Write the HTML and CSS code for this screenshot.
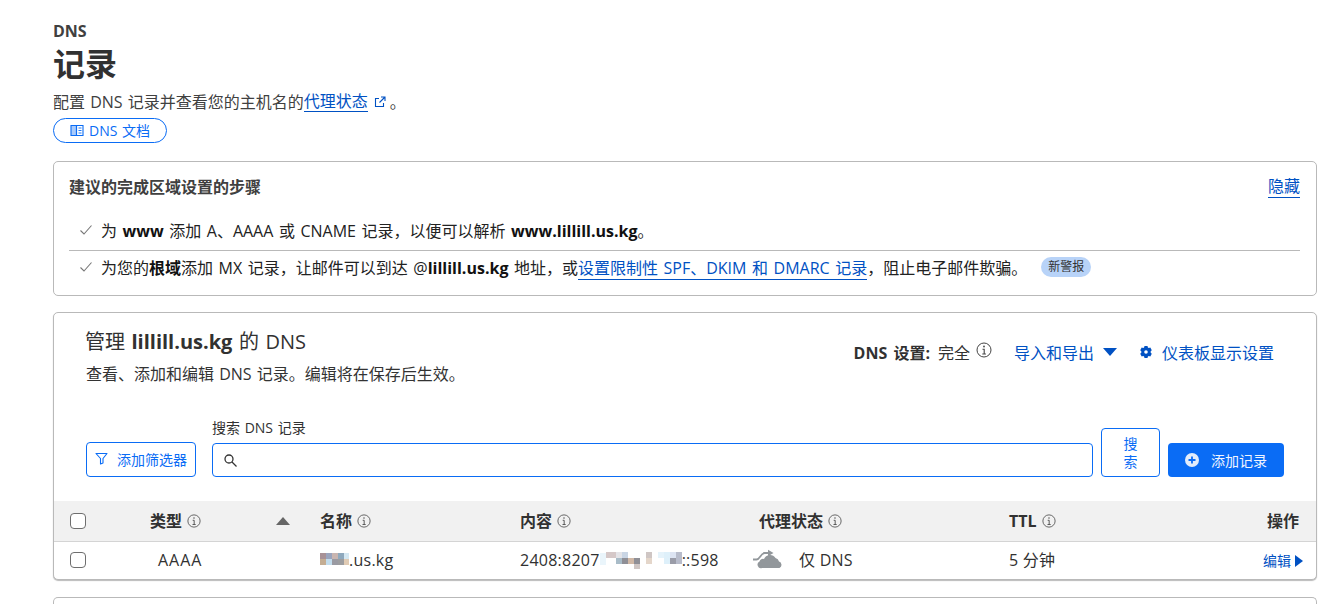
FILE: index.html
```html
<!DOCTYPE html>
<html lang="zh-CN">
<head>
<meta charset="utf-8">
<title>DNS 记录</title>
<link rel="stylesheet" href="styles.css">
</head>
<body>
<main class="page">
  <header class="head">
    <div class="crumb">DNS</div>
    <h1 class="title">记录</h1>
    <p class="desc">配置 DNS 记录并查看您的主机名的<a class="link" href="#">代理状态</a>
      <svg class="ext" width="14" height="14" viewBox="0 0 14 14" fill="none" stroke="#0051c3" stroke-width="1.1"><path d="M10.500 8v3.500h-8v-8H6"/><path d="M8 2h4v4M12 2 6.500 7.500"/></svg>。</p>
    <a class="doc-btn" href="#">
      <svg width="14" height="13" viewBox="0 0 14 13" fill="none" stroke="#0a6cf5" stroke-width="1.1"><path d="M1 1.500h5.500v10H1z" fill="#a9cbfb"/><path d="M6.500 1.500h6.500v10H6.500z"/><path d="M8.500 4h3M8.500 6.500h3M8.500 9h3" stroke-width=".9"/></svg>
      DNS 文档</a>
  </header>

  <section class="card steps">
    <div class="steps-head">
      <h2 class="steps-title">建议的完成区域设置的步骤</h2>
      <a class="link hide" href="#">隐藏</a>
    </div>
    <div class="step step-first">
      <svg class="check" width="14" height="12" viewBox="0 0 14 12" fill="none" stroke="#777" stroke-width="1.1"><path d="M1.500 6.500 5 10l7.500-8.500"/></svg>
      <span>为 <b>www</b> 添加 A、AAAA 或 CNAME 记录，以便可以解析 <b>www.lillill.us.kg</b>。</span>
    </div>
    <div class="step">
      <svg class="check" width="14" height="12" viewBox="0 0 14 12" fill="none" stroke="#777" stroke-width="1.1"><path d="M1.500 6.500 5 10l7.500-8.500"/></svg>
      <span>为您的<b>根域</b>添加 MX 记录，让邮件可以到达 @<b>lillill.us.kg</b> 地址，或<a class="link" href="#">设置限制性 SPF、DKIM 和 DMARC 记录</a>，阻止电子邮件欺骗。</span>
      <span class="badge">新警报</span>
    </div>
  </section>

  <section class="card dns">
    <div class="dns-top">
      <div>
        <h2 class="dns-title">管理 <b>lillill.us.kg</b> 的 DNS</h2>
        <p class="dns-sub">查看、添加和编辑 DNS 记录。编辑将在保存后生效。</p>
      </div>
      <div class="dns-actions">
        <span class="setting"><b>DNS 设置:</b> 完全
          <svg class="info big" viewBox="0 0 16 16" fill="none" stroke="#444"><circle cx="8" cy="8" r="7"/><path d="M6.500 7.200H8.200V12M6.300 12h3.600" stroke-width="1.1"/><circle cx="8" cy="4.500" r=".9" fill="#444" stroke="none"/></svg>
        </span>
        <a class="action export" href="#">导入和导出
          <svg width="14" height="8" viewBox="0 0 14 8"><path d="M0 0h14L7 8z" fill="#0051c3"/></svg>
        </a>
        <a class="action" href="#">
          <svg width="14" height="14" viewBox="0 0 14 14"><path fill="#0051c3" fill-rule="evenodd" d="M5.500 1h3l.4 1.500.9.500 1.500-.4 1.500 2.600-1.100 1.100v1.400l1.100 1.100-1.500 2.600-1.500-.4-.9.500-.4 1.500h-3l-.4-1.500-.9-.5-1.500.4-1.500-2.600 1.100-1.100V6.300L1.200 5.200l1.500-2.600 1.500.4.9-.5zM7 5.200a1.800 1.800 0 1 0 0 3.600 1.800 1.800 0 0 0 0-3.600z"/></svg>
          仪表板显示设置</a>
      </div>
    </div>

    <div class="toolbar">
      <button class="filter-btn" type="button">
        <svg width="13" height="13" viewBox="0 0 13 13" fill="none" stroke="#0a6cf5" stroke-width="1.1"><path d="M1 1.500h11L8 6.500V11L5.500 12V6.500z" stroke-linejoin="round"/></svg>
        添加筛选器</button>
      <div class="search">
        <label class="search-label" for="q">搜索 DNS 记录</label>
        <div class="search-box">
          <svg width="15" height="15" viewBox="0 0 15 15" fill="none" stroke="#333" stroke-width="1.3"><circle cx="6" cy="6" r="4"/><path d="m9 9 4.500 4.500"/></svg>
          <input id="q" class="search-input" type="text">
        </div>
      </div>
      <button class="search-btn" type="button">搜索</button>
      <button class="add-btn" type="button">
        <svg width="14" height="14" viewBox="0 0 14 14"><circle cx="7" cy="7" r="7" fill="#e3edfb"/><path d="M7 3.500v7M3.500 7h7" stroke="#0a6cf5" stroke-width="1.8"/></svg>
        添加记录</button>
    </div>

    <div class="row row-head">
      <span class="c-check"><span class="box"></span></span>
      <span class="c-type">类型 <svg class="info" viewBox="0 0 16 16" fill="none" stroke="#555"><circle cx="8" cy="8" r="7"/><path d="M6.500 7.200H8.200V12M6.300 12h3.600" stroke-width="1.1"/><circle cx="8" cy="4.500" r=".9" fill="#555" stroke="none"/></svg></span>
      <span class="c-sort"><svg width="14" height="8" viewBox="0 0 14 8"><path d="M7 0l7 8H0z" fill="#666"/></svg></span>
      <span class="c-name">名称 <svg class="info" viewBox="0 0 16 16" fill="none" stroke="#555"><circle cx="8" cy="8" r="7"/><path d="M6.500 7.200H8.200V12M6.300 12h3.600" stroke-width="1.1"/><circle cx="8" cy="4.500" r=".9" fill="#555" stroke="none"/></svg></span>
      <span class="c-content">内容 <svg class="info" viewBox="0 0 16 16" fill="none" stroke="#555"><circle cx="8" cy="8" r="7"/><path d="M6.500 7.200H8.200V12M6.300 12h3.600" stroke-width="1.1"/><circle cx="8" cy="4.500" r=".9" fill="#555" stroke="none"/></svg></span>
      <span class="c-proxy">代理状态 <svg class="info" viewBox="0 0 16 16" fill="none" stroke="#555"><circle cx="8" cy="8" r="7"/><path d="M6.500 7.200H8.200V12M6.300 12h3.600" stroke-width="1.1"/><circle cx="8" cy="4.500" r=".9" fill="#555" stroke="none"/></svg></span>
      <span class="c-ttl">TTL <svg class="info" viewBox="0 0 16 16" fill="none" stroke="#555"><circle cx="8" cy="8" r="7"/><path d="M6.500 7.200H8.200V12M6.300 12h3.600" stroke-width="1.1"/><circle cx="8" cy="4.500" r=".9" fill="#555" stroke="none"/></svg></span>
      <span class="c-op">操作</span>
    </div>
    <div class="row row-body">
      <span class="c-check"><span class="box"></span></span>
      <span class="c-type c-type-val">AAAA</span>
      <span class="c-sort"></span>
      <span class="c-name"><svg width="29" height="16" viewBox="0 0 29 16" shape-rendering="crispEdges"><rect width="6" height="6" x="0" y="1" fill="#a89196"/><rect width="6" height="6" x="6" y="1" fill="#9aa4bd"/><rect width="6" height="6" x="12" y="1" fill="#c9b5b0"/><rect width="6" height="6" x="18" y="1" fill="#8fa9bd"/><rect width="5" height="6" x="24" y="1" fill="#d5e8f2"/><rect width="6" height="6" x="0" y="7" fill="#c4ad93"/><rect width="6" height="6" x="6" y="7" fill="#c2dcec"/><rect width="6" height="6" x="12" y="7" fill="#9a9aa2"/><rect width="6" height="6" x="18" y="7" fill="#9d9d9f"/><rect width="5" height="6" x="24" y="7" fill="#e0cbb4"/></svg>.us.kg</span>
      <span class="c-content">2408:8207<svg width="82" height="22" viewBox="0 0 82 22" shape-rendering="crispEdges"><rect x="0" y="4" width="6" height="12" fill="#eaf5fb"/><rect x="6" y="3" width="10" height="6" fill="#d5c8c8"/><rect x="16" y="3" width="6" height="6" fill="#e4e4e8"/><rect x="22" y="3" width="6" height="6" fill="#c9d5e4"/><rect x="16" y="9" width="6" height="6" fill="#a9bcc8"/><rect x="22" y="9" width="6" height="6" fill="#8f8f96"/><rect x="28" y="9" width="6" height="6" fill="#d0b8a6"/><rect x="34" y="9" width="6" height="6" fill="#8f8f96"/><rect x="34" y="15" width="6" height="5" fill="#cfc6c4"/><rect x="46" y="3" width="6" height="6" fill="#cfc6c4"/><rect x="46" y="9" width="6" height="6" fill="#e4d6ca"/><rect x="58" y="3" width="6" height="6" fill="#e5f3fb"/><rect x="64" y="3" width="6" height="12" fill="#def0fa"/><rect x="70" y="3" width="6" height="6" fill="#dde4f2"/><rect x="70" y="9" width="6" height="6" fill="#9a9ca8"/><rect x="76" y="3" width="6" height="12" fill="#b8bccb"/></svg>::598</span>
      <span class="c-proxy proxy-val">
        <svg width="32" height="22" viewBox="0 0 32 22"><path d="M0 10.500h3.500c3.500 0 4-6 8-6.500h4" fill="none" stroke="#92979b" stroke-width="1.800"/><path d="m15 .8 5.500 3.200-5.500 3.200z" fill="#92979b"/><path d="M9 19a3.500 3.500 0 0 1-2.500-6.500 3.500 3.500 0 0 1 4.500-2.500 6.500 6.500 0 0 1 11.500-1 4.500 4.500 0 0 1 3.500 3.500 3.500 3.500 0 0 1 .5 6.500z" fill="#92979b"/></svg>
        <span>仅 DNS</span></span>
      <span class="c-ttl">5 分钟</span>
      <a class="c-op edit" href="#">编辑 <svg width="8" height="12" viewBox="0 0 8 12"><path d="M0 0l8 6-8 6z" fill="#0051c3"/></svg></a>
    </div>
  </section>

  <section class="card next"></section>
</main>
</body>
</html>
```
FILE: styles.css
```css
* { box-sizing: border-box; }
html, body { margin: 0; background: #fff; }
body {
  font-family: "Open Sans", "Noto Sans CJK SC", sans-serif;
  font-size: 16px;
  color: #313131;
}
.page { padding: 21px 19px 0 53px; }
.link { color: #0051c3; text-decoration: none; border-bottom: 1px solid #0051c3; }

.head { height: 124px; }
.crumb { font-size: 16px; font-weight: 700; line-height: 20px; color: #404040; }
.title { margin: 2px 0 0; font-size: 32px; font-weight: 700; line-height: 42px; color: #313131; }
.desc { margin: 7px 0 0; font-size: 16px; line-height: 20px; color: #404040; display: flex; align-items: center; word-spacing: 1px; }
.desc .link { line-height: 19px; }
.ext { margin: 0 3px 0 5px; }
.doc-btn {
  display: inline-flex; align-items: center; justify-content: center; gap: 5px;
  width: 114px; height: 25px; margin-top: 6px;
  border: 1px solid #0a6cf5; border-radius: 13px;
  color: #0a6cf5; text-decoration: none; font-size: 14px; line-height: 20px; word-spacing: 1px;
}

.card { border: 1px solid #b9b9b9; border-radius: 5px; background: #fff; }
.steps { height: 135px; margin-top: 16px; padding: 14px 16px 0 15px; }
.steps-head { display: flex; justify-content: space-between; align-items: center; height: 22px; }
.steps-title { margin: 0; font-size: 16px; font-weight: 700; line-height: 22px; color: #404040; }
.hide { font-size: 16px; line-height: 21px; }
.step { display: flex; align-items: center; height: 32px; padding-left: 10px; color: #222; font-size: 16px; white-space: nowrap; word-spacing: 1.4px; }
.step b { font-weight: 700; color: #111; }
.step-first { margin-top: 12px; height: 41px; border-bottom: 1px solid #b9b9b9; }
.check { margin-right: 8px; flex: none; }
.badge {
  margin-left: 14px; padding: 0 7px; height: 20px; line-height: 20px;
  border-radius: 10px; background: #b8d3f8; color: #333; font-size: 12px;
}

.dns { height: 268px; margin-top: 16px; box-shadow: 0 1px 1px #bbb; }
.dns-top { display: flex; justify-content: space-between; height: 104px; padding: 16px 42px 0 31px; }
.dns-title { margin: 0; font-size: 20px; font-weight: 400; line-height: 26px; color: #313131; word-spacing: 1.3px; }
.dns-title b { font-weight: 700; }
.dns-sub { margin: 9px 0 0 1px; font-size: 16px; line-height: 20px; color: #333; word-spacing: 1px; }
.dns-actions { display: flex; align-items: center; height: 46px; gap: 22px; font-size: 16px; }
.setting { display: flex; align-items: center; gap: 6px; color: #313131; }
.setting b { font-weight: 700; margin-right: 2px; word-spacing: 2px; }
.action { display: flex; align-items: center; gap: 9px; color: #0051c3; text-decoration: none; }
.info { width: 14px; height: 14px; }
.info.big { width: 16px; height: 16px; margin-top: -4px; }

.toolbar { display: flex; align-items: flex-end; gap: 8px; height: 84px; padding: 0 32px 24px; }
.filter-btn {
  display: flex; align-items: center; justify-content: center; gap: 9px;
  width: 110px; height: 35px; margin-right: 8px; padding: 0 0 2px;
  background: #fff; border: 1px solid #0a6cf5; border-radius: 4px;
  color: #0a6cf5; font: inherit; font-size: 14px;
}
.search { flex: 1; }
.search-label { display: block; font-size: 14px; line-height: 20px; margin-bottom: 5px; color: #313131; word-spacing: 1px; }
.search-box {
  display: flex; align-items: center; gap: 6px; height: 34px; padding: 1px 10px;
  border: 1px solid #0a6cf5; border-radius: 4px;
}
.search-input { flex: 1; min-width: 0; border: 0; outline: 0; background: none; }
.search-btn {
  width: 59px; height: 49px; padding: 0 16px;
  background: #fff; border: 1px solid #0a6cf5; border-radius: 4px;
  color: #0a6cf5; font: inherit; font-size: 14px; line-height: 18px;
}
.add-btn {
  display: flex; align-items: center; justify-content: center; gap: 12px;
  width: 116px; height: 34px; padding: 0 0 1px;
  background: #0a6cf5; border: 0; border-radius: 4px;
  color: #f0f5ff; font: inherit; font-size: 14px;
}

.row {
  display: grid;
  grid-template-columns: 96px 127px 43px 200px 239px 250px 1fr 50px;
  align-items: center; padding-right: 17px;
}
.row-head { height: 41px; background: #f1f1f1; border-bottom: 1px solid #d4d4d4; font-weight: 700; font-size: 16px; color: #313131; line-height: 20px; }
.row-head > span { padding-bottom: 1px; }
.row-body { height: 37px; font-size: 16px; line-height: 20px; color: #313131; letter-spacing: .25px; }
.row-body > span { padding-bottom: 1px; }
.c-check { padding-left: 16px; display: flex; }
.box { width: 16px; height: 16px; border: 1px solid #6e6e6e; border-radius: 4px; background: #fff; }
.c-sort { display: flex; margin-left: -1px; }
.c-type-val { padding-left: 8px; letter-spacing: 1px; }
.c-name, .c-content { display: flex; align-items: center; gap: 5px; }
.row-body .c-name, .row-body .c-content { gap: 0; }
.row-head .c-type, .row-head .c-ttl, .row-head .c-proxy { display: flex; align-items: center; gap: 5px; }
.c-op { text-align: right; white-space: nowrap; }
.proxy-val { display: flex; align-items: center; gap: 14px; margin-left: -6px; }
.edit { display: flex; align-items: center; justify-content: flex-end; gap: 4px; color: #0051c3; text-decoration: none; font-size: 14px; letter-spacing: 0; margin-right: -4px; }

.next { height: 8px; margin-top: 17px; border-bottom: 0; border-radius: 5px 5px 0 0; }
```
